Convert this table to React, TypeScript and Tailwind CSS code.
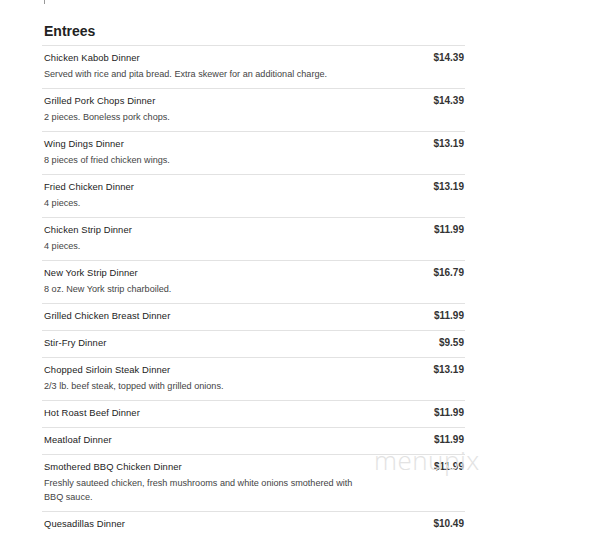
import React from 'react';

interface IItem {
	name: string;
	desc?: string;
	price: string;
}

const items: IItem[] = [
	{ name: 'Chicken Kabob Dinner', desc: 'Served with rice and pita bread. Extra skewer for an additional charge.', price: '$14.39' },
	{ name: 'Grilled Pork Chops Dinner', desc: '2 pieces. Boneless pork chops.', price: '$14.39' },
	{ name: 'Wing Dings Dinner', desc: '8 pieces of fried chicken wings.', price: '$13.19' },
	{ name: 'Fried Chicken Dinner', desc: '4 pieces.', price: '$13.19' },
	{ name: 'Chicken Strip Dinner', desc: '4 pieces.', price: '$11.99' },
	{ name: 'New York Strip Dinner', desc: '8 oz. New York strip charboiled.', price: '$16.79' },
	{ name: 'Grilled Chicken Breast Dinner', price: '$11.99' },
	{ name: 'Stir-Fry Dinner', price: '$9.59' },
	{ name: 'Chopped Sirloin Steak Dinner', desc: '2/3 lb. beef steak, topped with grilled onions.', price: '$13.19' },
	{ name: 'Hot Roast Beef Dinner', price: '$11.99' },
	{ name: 'Meatloaf Dinner', price: '$11.99' },
	{
		name: 'Smothered BBQ Chicken Dinner',
		desc: 'Freshly sauteed chicken, fresh mushrooms and white onions smothered with BBQ sauce.',
		price: '$11.99',
	},
	{ name: 'Quesadillas Dinner', price: '$10.49' },
];

const MenuRow = ({ item }: { item: IItem }) => {
	return (
		<div className="flex border-t border-[#e2e2e2] pl-[2px] pr-[1px] pt-[5px] pb-[7px]">
			<div className="flex-1">
				<p className="text-[9.4px] leading-[14px] text-[#222] tracking-[0.1px]">{item.name}</p>
				{item.desc && (
					<p className="mt-[2px] max-w-[330px] text-[9.1px] leading-[14px] text-[#444]">{item.desc}</p>
				)}
			</div>
			<p className="text-[10px] leading-[14px] font-bold text-[#333]">{item.price}</p>
		</div>
	);
};

const App = () => {
	return (
		<div className="relative h-[542px] w-[608px] overflow-hidden bg-white font-['Liberation_Sans',Arial,sans-serif]">
			{/* cut-off text from above */}
			<div className="ml-[44px] h-[4px] w-[1px] bg-[#999]" />
			<div className="ml-[42px] w-[423px] pt-[17px]">
				<h2 className="pl-[2px] text-[14px] leading-[20px] font-bold text-[#222]">Entrees</h2>
				<div className="mt-[4px]">
					{items.map((item) => (
						<MenuRow key={item.name} item={item} />
					))}
				</div>
			</div>
			{/* watermark */}
			<span className="pointer-events-none absolute left-[374px] top-[447px] text-[26px] leading-none font-light tracking-[0.5px] text-[#e3e3e3] font-['Open_Sans',sans-serif]">
				menupix
			</span>
		</div>
	);
};

export default App;
